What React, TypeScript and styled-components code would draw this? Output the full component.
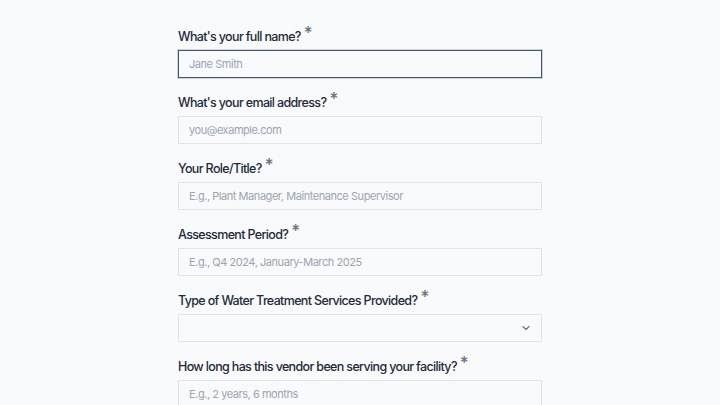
import React from "react";
import styled, { createGlobalStyle } from "styled-components";

const GlobalStyle = createGlobalStyle`
  html, body {
    margin: 0;
    padding: 0;
    background: #f8fafc;
    font-family: Inter, "Noto Sans", sans-serif;
  }
`;

const Page = styled.div`
  min-height: 405px;
  display: flex;
  justify-content: center;
  padding-top: 27px;
  box-sizing: border-box;
`;

const Form = styled.form`
  width: 364px;
  display: flex;
  flex-direction: column;
  gap: 15px;
`;

const Field = styled.div`
  display: flex;
  flex-direction: column;
  gap: 3px;
`;

const Label = styled.label`
  font-size: 12.5px;
  line-height: 20px;
  font-weight: 450;
  color: #1e293b;
  letter-spacing: -0.65px;
`;

const Star = styled.span`
  font-size: 17px;
  color: #6b7280;
  margin-left: 3px;
  position: relative;
  top: -2px;
  line-height: 0;
  letter-spacing: 0;
`;

const Input = styled.input<{ $focused?: boolean }>`
  height: 28px;
  box-sizing: border-box;
  border: 1px solid ${(p) => (p.$focused ? "#475569" : "#dfe4ea")};
  box-shadow: ${(p) => (p.$focused ? "0 0 0 1px #cbd5e1" : "none")};
  background: #f9fafb;
  padding: 0 10px;
  font-family: Inter, "Noto Sans", sans-serif;
  font-size: 11px;
  letter-spacing: -0.45px;
  color: #1e293b;
  outline: none;
  border-radius: 0;

  &::placeholder {
    color: #9aa5b4;
  }
`;

const SelectBox = styled.div`
  height: 28px;
  box-sizing: border-box;
  border: 1px solid #dfe4ea;
  background: #f9fafb;
  display: flex;
  align-items: center;
  justify-content: flex-end;
  padding-right: 9px;
  color: #64748b;
`;

const fields = [
  { label: "What's your full name?", placeholder: "Jane Smith", focused: true },
  { label: "What's your email address?", placeholder: "you@example.com" },
  { label: "Your Role/Title?", placeholder: "E.g., Plant Manager, Maintenance Supervisor" },
  { label: "Assessment Period?", placeholder: "E.g., Q4 2024, January-March 2025" },
  { label: "Type of Water Treatment Services Provided?", select: true },
  { label: "How long has this vendor been serving your facility?", placeholder: "E.g., 2 years, 6 months" },
];

export default function App() {
  return (
    <>
      <GlobalStyle />
      <Page>
        <Form>
          {fields.map((f) => (
            <Field key={f.label}>
              <Label>
                {f.label}
                <Star>*</Star>
              </Label>
              {f.select ? (
                <SelectBox>
                  <svg width="12" height="12" viewBox="0 0 24 24" fill="none" stroke="currentColor" strokeWidth="2.2" strokeLinecap="round" strokeLinejoin="round">
                    <path d="m6 9 6 6 6-6" />
                  </svg>
                </SelectBox>
              ) : (
                <Input placeholder={f.placeholder} $focused={f.focused} />
              )}
            </Field>
          ))}
        </Form>
      </Page>
    </>
  );
}
